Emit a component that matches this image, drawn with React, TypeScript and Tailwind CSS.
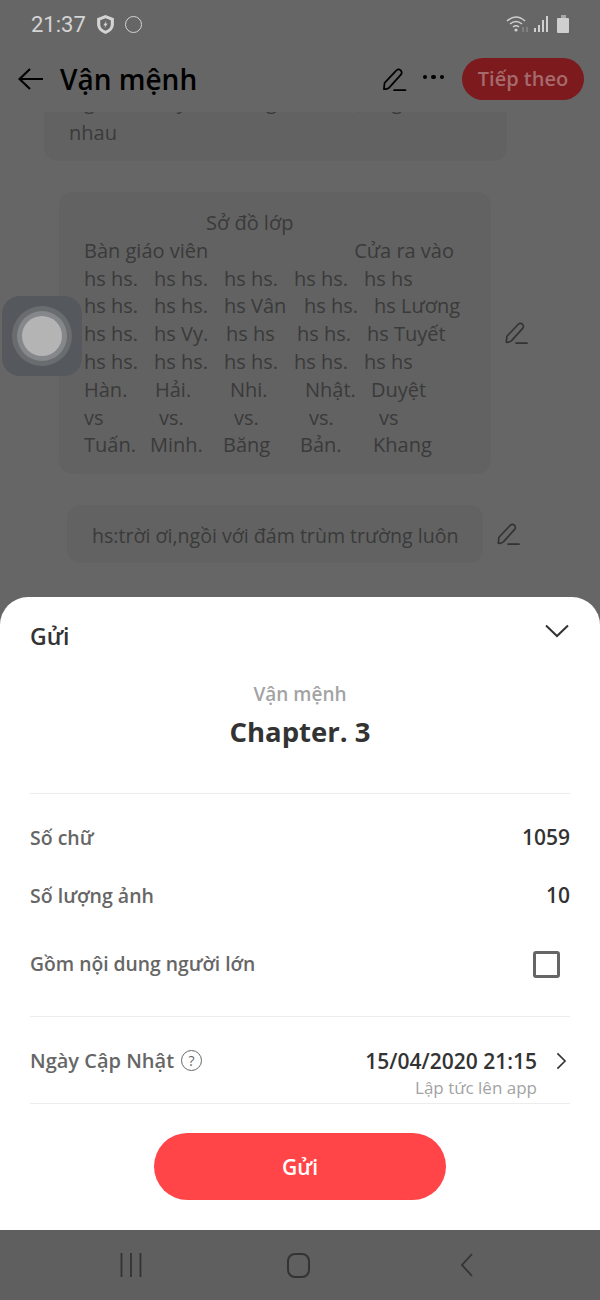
const font = "font-['Open_Sans','Noto_Sans',sans-serif]";

function Pencil({ className }: { className?: string }) {
  return (
    <svg viewBox="0 0 26 26" fill="none" stroke="currentColor" strokeWidth="1.8" strokeLinecap="round" strokeLinejoin="round" className={className}>
      <path d="M2.5 23 L3.2 16.5 L15.5 3.5 Q17.8 1.6 20 3.5 Q22 5.8 20.2 8 L8 21.5 Q5 23.5 2.5 23 Z" />
      <path d="M13 24 H25" />
    </svg>
  );
}

const rows: [string, number][][] = [
  [["hs hs.", 0], ["hs hs.", 70], ["hs hs.", 140], ["hs hs.", 210], ["hs hs", 280]],
  [["hs hs.", 0], ["hs hs.", 70], ["hs Vân", 140], ["hs hs.", 220], ["hs Lương", 290]],
  [["hs hs.", 0], ["hs Vy.", 70], ["hs hs", 142], ["hs hs.", 213], ["hs Tuyết", 283]],
  [["hs hs.", 0], ["hs hs.", 70], ["hs hs.", 140], ["hs hs.", 210], ["hs hs", 280]],
  [["Hàn.", 0], ["Hải.", 71], ["Nhi.", 146], ["Nhật.", 221], ["Duyệt", 287]],
  [["vs", 0], ["vs.", 75], ["vs.", 150], ["vs.", 225], ["vs", 295]],
  [["Tuấn.", 0], ["Minh.", 66], ["Băng", 139], ["Bản.", 216], ["Khang", 289]],
];

function Row({ label, value }: { label: string; value: string }) {
  return (
    <div className="flex items-center justify-between h-[58px]">
      <span className="text-[19.5px] font-semibold text-[#666]">{label}</span>
      <span className="text-[21px] font-semibold text-[#333]">{value}</span>
    </div>
  );
}

export default function App() {
  return (
    <div className={`w-[600px] h-[1300px] flex flex-col overflow-hidden bg-[#666666] ${font}`}>
      {/* status bar */}
      <div className="h-[48px] flex items-center justify-between pl-[31px] pr-[31px] text-[#d4d4d4] shrink-0">
        <div className="flex items-center gap-[10px]">
          <span className="text-[22px] font-['Roboto',sans-serif]">21:37</span>
          <svg viewBox="0 0 18 20" className="w-[19px] h-[21px]">
            <path d="M9 1 L17 4 V10 Q17 16 9 19 Q1 16 1 10 V4 Z" fill="#d4d4d4" />
            <path d="M9 4 L14 6 V10 Q14 14 9 16 Q4 14 4 10 V6 Z" fill="#666" />
            <path d="M10 6 L7 11 H9 L8 14 L11 9 H9 Z" fill="#d4d4d4" />
          </svg>
          <span className="w-[17px] h-[17px] rounded-full border-[1.5px] border-[#d4d4d4]" />
        </div>
        <div className="flex items-center gap-[4px]">
          <svg viewBox="0 0 24 20" className="w-[24px] h-[20px]" fill="none" stroke="#cfcfcf" strokeWidth="1.6">
            <path d="M1 7 Q10 -1 19 7" />
            <path d="M4 10 Q10 5 16 10" />
            <path d="M7 13 Q10 10.5 13 13" />
            <circle cx="10" cy="16" r="1.6" fill="#cfcfcf" stroke="none" />
            <path d="M17 13 V18 M21 18 V13" strokeWidth="1" stroke="#9a9a9a" />
          </svg>
          <svg viewBox="0 0 16 18" className="w-[16px] h-[18px]" fill="#cfcfcf">
            <rect x="0" y="13" width="2" height="4" />
            <rect x="4" y="10" width="2" height="7" />
            <rect x="8" y="5" width="2" height="12" />
            <rect x="12" y="1" width="2" height="16" />
          </svg>
          <div className="flex flex-col items-center ml-[3px]">
            <span className="w-[5px] h-[3px] bg-[#a8a8a8]" />
            <span className="w-[12px] h-[15px] bg-[#cfcfcf] rounded-[1px]" />
          </div>
        </div>
      </div>

      {/* app bar */}
      <div className="h-[64px] pb-[2px] flex items-center pl-[18px] pr-[16px] shrink-0">
        <svg viewBox="0 0 25 22" fill="none" stroke="#000" strokeWidth="2.2" className="w-[25px] h-[22px]">
          <path d="M25 11 H2 M12 1 L1.6 11 L12 21" />
        </svg>
        <span className="ml-[17px] text-[28px] font-semibold text-black">Vận mệnh</span>
        <Pencil className="ml-auto w-[26px] h-[25px] text-black" />
        <span className="ml-[16px] mb-[4px] flex gap-[4px]">
          <i className="w-[4.5px] h-[4.5px] rounded-full bg-black" />
          <i className="w-[4.5px] h-[4.5px] rounded-full bg-black" />
          <i className="w-[4.5px] h-[4.5px] rounded-full bg-black" />
        </span>
        <span className="ml-[18px] w-[122px] h-[42px] rounded-full bg-[#7c1a1e] flex items-center justify-center text-[20px] font-semibold text-[#a66a6c]">Tiếp theo</span>
      </div>

      {/* dimmed editor behind the sheet, scrolled under the app bar */}
      <div className="relative flex-1 min-h-0 overflow-hidden text-[#3a3a3a] text-[20px] leading-[27.8px]">
        <div className="flex items-start -mt-[29px]">
          <div className="ml-[44px] w-[463px] h-[78px] rounded-b-[14px] bg-[#626262] pl-[25px] pt-[6px] whitespace-nowrap">
            <div className="leading-[25px] mb-[4.8px]">Ngồi với Huy, Hà Đăng ,con Nhựt ngồi với</div>
            <div>nhau</div>
          </div>
          <Pencil className="ml-[13px] mt-[6px] w-[24px] h-[24px] text-[#333]" />
        </div>
        <div className="mt-[31px] ml-[59px] mr-[68px] flex items-center">
          <div className="w-[432px] rounded-[14px] bg-[#626262] pl-[25px] pt-[17px] pb-[15px]">
            <div className="pl-[122px]">Sở đồ lớp</div>
            <div className="flex justify-between pr-[37px]"><span>Bàn giáo viên</span><span>Cửa ra vào</span></div>
            {rows.map((row, i) => (
              <div key={i} className="relative h-[27.8px]">
                {row.map(([t, x]) => (
                  <span key={x} className="absolute top-0 whitespace-nowrap" style={{ left: x }}>{t}</span>
                ))}
              </div>
            ))}
          </div>
          <Pencil className="ml-[13px] w-[24px] h-[24px] text-[#333]" />
        </div>
        <div className="mt-[31px] ml-[67px] flex items-center">
          <div className="w-[416px] h-[58px] rounded-[14px] bg-[#626262] flex items-center pl-[25px] pt-[3px] whitespace-nowrap text-[19.6px]">hs:trời ơi,ngồi với đám trùm trường luôn</div>
          <Pencil className="ml-[13px] w-[24px] h-[24px] text-[#333]" />
        </div>

        {/* assistive touch */}
        <div className="absolute left-[2px] top-[184px] w-[80px] h-[80px] rounded-[18px] bg-[#55585c] flex items-center justify-center">
          <div className="w-[60px] h-[60px] rounded-full bg-[#6a6d70] flex items-center justify-center">
            <div className="w-[50px] h-[50px] rounded-full bg-[#85878a] flex items-center justify-center">
              <div className="w-[40px] h-[40px] rounded-full bg-[#b4b4b4]" />
            </div>
          </div>
        </div>
      </div>

      {/* bottom sheet */}
      <div className="h-[633px] shrink-0 bg-white rounded-t-[28px] px-[30px] flex flex-col">
        <div className="flex items-center justify-between h-[78px]">
          <span className="text-[23px] font-semibold text-[#333]">Gửi</span>
          <svg viewBox="0 0 24 14" fill="none" stroke="#333" strokeWidth="2" className="w-[24px] h-[14px] mr-[1px] mb-[10px]">
            <path d="M1 1.5 L12 12 L23 1.5" />
          </svg>
        </div>
        <div className="text-center text-[19px] font-semibold text-[#a3a3a3] mt-[5px]">Vận mệnh</div>
        <div className="text-center text-[27.5px] leading-[42px] font-bold text-[#333] mt-[2px]">Chapter. 3</div>
        <div className="mt-[40px] border-t border-[#ececec]" />
        <div className="mt-[15px]">
          <Row label="Số chữ" value="1059" />
          <Row label="Số lượng ảnh" value="10" />
        </div>
        <div className="flex items-center justify-between h-[70px] mt-[5px]">
          <span className="text-[19.3px] font-semibold text-[#666]">Gồm nội dung người lớn</span>
          <span className="w-[27px] h-[27px] mr-[10px] rounded-[3px] border-[3px] border-[#666]" />
        </div>
        <div className="mt-[16px] border-t border-[#ececec]" />
        <div className="h-[86px] flex justify-between pt-[29px]">
          <div className="flex items-start gap-[7px]">
            <span className="text-[20px] leading-[30px] font-semibold text-[#666]">Ngày Cập Nhật</span>
            <span className="mt-[4px] w-[21px] h-[21px] rounded-full border border-[#666] flex items-center justify-center text-[14px] text-[#666]">?</span>
          </div>
          <div className="flex items-start">
            <div className="text-right">
              <div className="text-[21px] leading-[30px] font-semibold text-[#333]">15/04/2020 21:15</div>
              <div className="text-[17px] leading-[23px] text-[#a3a3a3]">Lập tức lên app</div>
            </div>
            <svg viewBox="0 0 12 20" fill="none" stroke="#333" strokeWidth="1.8" className="ml-[18px] mr-[3px] mt-[6px] w-[12px] h-[18px]">
              <path d="M2 1.5 L10.5 10 L2 18.5" />
            </svg>
          </div>
        </div>
        <div className="border-t border-[#ececec]" />
        <button className="mt-[29px] mx-auto w-[292px] h-[67px] pt-[3px] rounded-full bg-[#ff4548] text-white text-[21px] font-semibold">Gửi</button>
      </div>

      {/* nav bar */}
      <div className="h-[70px] shrink-0 bg-[#5f5f5f] flex items-center pl-[120px] text-[#333]">
        <svg viewBox="0 0 22 24" fill="none" stroke="currentColor" strokeWidth="1.8" className="w-[22px] h-[24px]">
          <path d="M1.5 0 V24 M11 0 V24 M20.5 0 V24" />
        </svg>
        <span className="ml-[145px] w-[23px] h-[25px] rounded-[8px] border-2 border-current" />
        <svg viewBox="0 0 14 24" fill="none" stroke="currentColor" strokeWidth="1.8" className="ml-[150px] w-[14px] h-[24px]">
          <path d="M12 1 L2 12 L12 23" />
        </svg>
      </div>
    </div>
  );
}
